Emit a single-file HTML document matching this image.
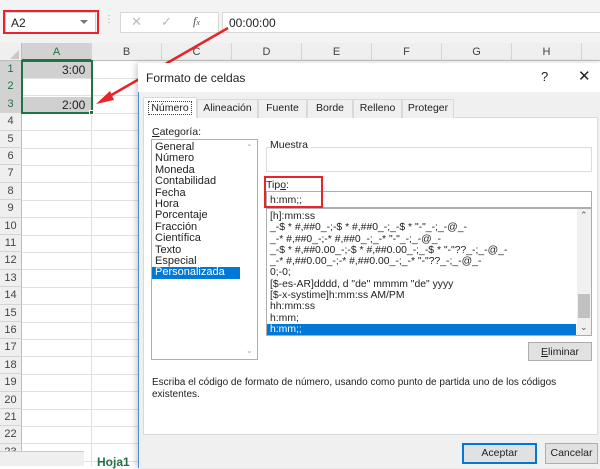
<!DOCTYPE html>
<html><head><style>
*{margin:0;padding:0;box-sizing:border-box}
body{width:600px;height:466px;overflow:hidden;background:#fff;font-family:"Liberation Sans",sans-serif;font-size:11px;color:#222;position:relative}
.a{position:absolute}
.rh{position:absolute;left:0;width:22px;height:17.4px;background:#efefef;border-bottom:1px solid #d4d4d4;border-right:1px solid #bcbcbc;font-size:11px;color:#444;text-align:center;line-height:17px}
.ch{position:absolute;top:43px;height:18px;background:#efefef;border-right:1px solid #d4d4d4;border-bottom:1px solid #bcbcbc;text-align:center;line-height:18px;font-size:11px;color:#444}
.hl{position:absolute;left:22px;right:0;height:1px;background:#e1e1e1}
.vl{position:absolute;top:61px;bottom:0;width:1px;background:#e1e1e1}
.tab{position:absolute;top:99px;height:19px;border:1px solid #d9d9d9;border-bottom:none;background:#f0f0f0;text-align:center;line-height:17px;font-size:10.5px}
.li{font-size:11px;line-height:11.4px;padding-left:3px;white-space:nowrap}
.t{font-size:10.4px;line-height:11.3px;padding-left:3px;white-space:nowrap}
.btn{position:absolute;background:#e1e1e1;border:1px solid #adadad;text-align:center;font-size:10.5px;line-height:18px}
</style></head><body>
<div class="a" style="left:0;top:0;width:600px;height:43px;background:#f3f3f3"></div>
<div class="a" style="left:5px;top:12px;width:91px;height:21px;background:#fff;border:1px solid #d0d0d0"></div>
<div class="a" style="left:11px;top:16px;font-size:12px">A2</div>
<div class="a" style="left:80px;top:20px;width:0;height:0;border-left:4px solid transparent;border-right:4px solid transparent;border-top:4px solid #777"></div>
<div class="a" style="left:3px;top:10px;width:96px;height:24px;border:2px solid #e8242a"></div>
<div class="a" style="left:104px;top:14px;color:#aaa;font-size:10px">⋮</div>
<div class="a" style="left:120px;top:12px;width:99px;height:21px;background:#fff;border:1px solid #d8d8d8"></div>
<div class="a" style="left:131px;top:14px;color:#bbb;font-size:13px">✕</div>
<div class="a" style="left:161px;top:14px;color:#bbb;font-size:13px">✓</div>
<div class="a" style="left:193px;top:14px;color:#555;font-size:12px;font-style:italic;font-family:'Liberation Serif',serif">f<span style="font-size:8px">x</span></div>
<div class="a" style="left:222px;top:12px;width:380px;height:21px;background:#fff;border:1px solid #d8d8d8"></div>
<div class="a" style="left:229px;top:16px;font-size:12px">00:00:00</div>
<div class="a" style="left:0;top:43px;width:22px;height:18px;background:#efefef;border-right:1px solid #bcbcbc;border-bottom:1px solid #bcbcbc"></div>
<div class="a" style="left:10px;top:50px;width:0;height:0;border-left:9px solid transparent;border-bottom:9px solid #c8c8c8"></div>
<div class="ch" style="left:22px;width:70px;background:#d2d2d2;color:#217346;border-bottom:2px solid #217346">A</div>
<div class="ch" style="left:92px;width:70px">B</div>
<div class="ch" style="left:162px;width:70px">C</div>
<div class="ch" style="left:232px;width:70px">D</div>
<div class="ch" style="left:302px;width:70px">E</div>
<div class="ch" style="left:372px;width:70px">F</div>
<div class="ch" style="left:442px;width:70px">G</div>
<div class="ch" style="left:512px;width:70px">H</div>
<div class="ch" style="left:582px;width:30px"></div>
<div class="vl" style="left:91px"></div>
<div id="rows"></div>
<div class="a" style="left:23px;top:62px;width:68px;height:16px;background:#d0d0d0"></div>
<div class="a" style="left:23px;top:97px;width:68px;height:16px;background:#d0d0d0"></div>
<div class="a" style="left:62px;top:63px;font-size:12px">3:00</div>
<div class="a" style="left:62px;top:98px;font-size:12px">2:00</div>
<div class="a" style="left:21px;top:60px;width:72px;height:54px;border:2px solid #217346"></div>
<div class="a" style="left:89px;top:110px;width:5px;height:5px;background:#217346;border:1px solid #fff"></div>
<div class="a" style="left:0;top:451px;width:84px;height:15px;background:#efefef;border-top:1px solid #ccc"></div>
<div class="a" style="left:97px;top:455px;font-size:12px;font-weight:bold;color:#217346">Hoja1</div>
<script>
var s='';for(var i=0;i<23;i++){var y=61+i*17.4;var sel=i<3;s+='<div class="rh" style="top:'+y+'px;'+(sel?'background:#d2d2d2;color:#217346;':'')+'">'+(i+1)+'</div><div class="hl" style="top:'+(y+17)+'px"></div>';}
document.getElementById('rows').innerHTML=s;
</script>
<svg class="a" style="left:0;top:0" width="600" height="466"><line x1="228" y1="28" x2="108" y2="97" stroke="#e8242a" stroke-width="2.5"/><polygon points="96,104 110,91 114,100" fill="#e8242a"/></svg>
<div class="a" style="left:138px;top:63px;width:464px;height:405px;background:#f0f0f0;border-left:1px solid #4a8fd8;box-shadow:-2px 0 6px rgba(0,0,0,.2)"></div>
<div class="a" style="left:138px;top:63px;width:464px;height:29px;background:#fff"></div>
<div class="a" style="left:146px;top:71px;font-size:12px">Formato de celdas</div>
<div class="a" style="left:541px;top:69px;font-size:13px">?</div>
<div class="a" style="left:578px;top:67px;font-size:15px">✕</div>
<div class="a" style="left:143px;top:117px;width:455px;height:318px;background:#fff;border:1px solid #d9d9d9"></div>
<div class="tab" style="left:143px;top:97px;width:54px;height:21px;background:#fff;line-height:20px"><span style="border:1px dotted #444;padding:0 2px">Número</span></div>
<div class="tab" style="left:197px;width:61px">Alineación</div>
<div class="tab" style="left:258px;width:49px">Fuente</div>
<div class="tab" style="left:307px;width:46px">Borde</div>
<div class="tab" style="left:353px;width:49px">Relleno</div>
<div class="tab" style="left:402px;width:52px">Proteger</div>
<div class="a" style="left:152px;top:126px;font-size:10.5px"><u>C</u>ategoría:</div>
<div class="a" style="left:151px;top:139px;width:107px;height:221px;border:1px solid #adadad;padding-top:2px">
<div class="li">General</div><div class="li">Número</div><div class="li">Moneda</div><div class="li">Contabilidad</div><div class="li">Fecha</div><div class="li">Hora</div><div class="li">Porcentaje</div><div class="li">Fracción</div><div class="li">Científica</div><div class="li">Texto</div><div class="li">Especial</div><div class="li" style="background:#0078d7;color:#fff;width:88px">Personalizada</div>
</div>
<div class="a" style="left:246px;top:143px;font-size:8px;color:#aaa">⌃</div>
<div class="a" style="left:246px;top:346px;font-size:8px;color:#aaa">⌄</div>
<div class="a" style="left:266px;top:147px;width:326px;height:25px;border:1px solid #dcdcdc"></div>
<div class="a" style="left:270px;top:139px;background:#fff;padding-right:2px;font-size:10.5px">Muestra</div>
<div class="a" style="left:266px;top:179px;font-size:10.5px">Tip<u>o</u>:</div>
<div class="a" style="left:266px;top:191px;width:326px;height:17px;border:1px solid #adadad"></div>
<div class="a" style="left:270px;top:194px;font-size:10.5px">h:mm;;</div>
<div class="a" style="left:264px;top:176px;width:59px;height:32px;border:2px solid #e8242a"></div>
<div class="a" style="left:266px;top:208px;width:326px;height:128px;border:1px solid #adadad;padding-top:2px;overflow:hidden">
<div class="t">[h]:mm:ss</div>
<div class="t">_-$ * #,##0_-;-$ * #,##0_-;_-$ * "-"_-;_-@_-</div>
<div class="t">_-* #,##0_-;-* #,##0_-;_-* "-"_-;_-@_-</div>
<div class="t">_-$ * #,##0.00_-;-$ * #,##0.00_-;_-$ * "-"??_-;_-@_-</div>
<div class="t">_-* #,##0.00_-;-* #,##0.00_-;_-* "-"??_-;_-@_-</div>
<div class="t">0;-0;</div>
<div class="t">[$-es-AR]dddd, d "de" mmmm "de" yyyy</div>
<div class="t">[$-x-systime]h:mm:ss AM/PM</div>
<div class="t">hh:mm:ss</div>
<div class="t">h:mm;</div>
<div class="t" style="background:#0078d7;color:#fff;width:309px">h:mm;;</div>
</div>
<div class="a" style="left:577px;top:209px;width:14px;height:126px;background:#f0f0f0"></div>
<div class="a" style="left:578px;top:294px;width:12px;height:24px;background:#c1c1c1"></div>
<div class="a" style="left:580px;top:210px;font-size:9px;color:#555">⌃</div>
<div class="a" style="left:580px;top:322px;font-size:9px;color:#555">⌄</div>
<div class="btn" style="left:528px;top:342px;width:64px;height:19px"><u>E</u>liminar</div>
<div class="a" style="left:152px;top:377px;font-size:10px;line-height:12px;width:430px">Escriba el código de formato de número, usando como punto de partida uno de los códigos existentes.</div>
<div class="btn" style="left:462px;top:443px;width:75px;height:21px;border:2px solid #0078d7;line-height:17px">Aceptar</div>
<div class="btn" style="left:545px;top:443px;width:53px;height:21px;line-height:19px">Cancelar</div>
</body></html>
